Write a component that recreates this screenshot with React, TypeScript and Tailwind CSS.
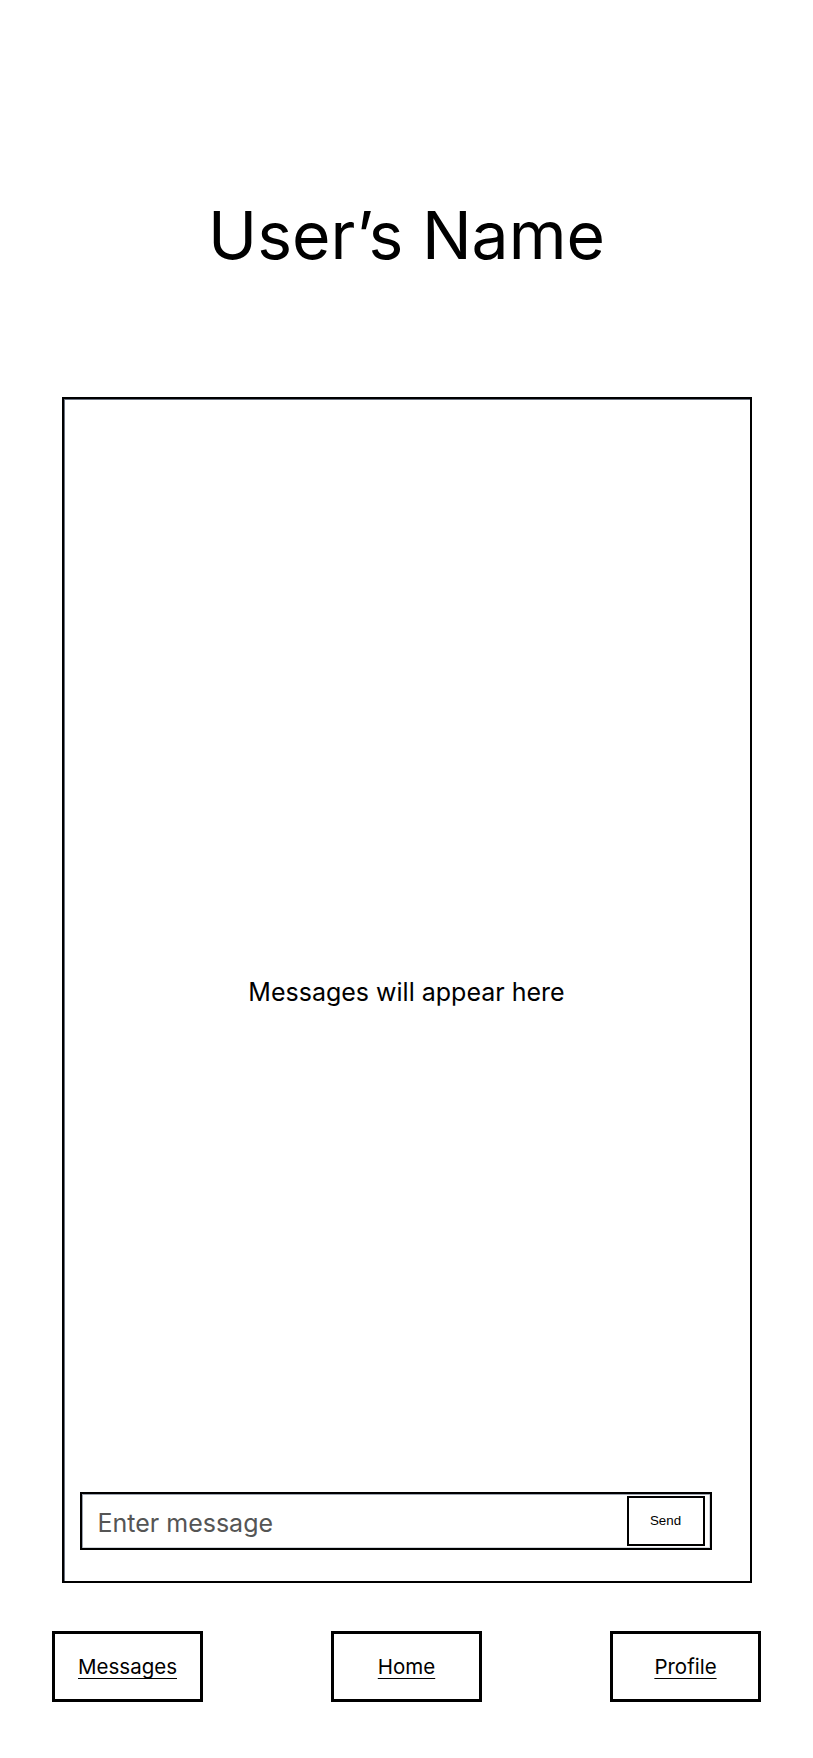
const navItems = ["Messages", "Home", "Profile"];

export default function App() {
  return (
    <div
      className="w-[813px] min-h-[1758px] bg-white text-black flex flex-col items-center"
      style={{ fontFamily: "Inter, 'Liberation Sans', sans-serif" }}
    >
      <h1 className="mt-[202px] text-[66px] leading-[66px] font-normal">
        User’s Name
      </h1>

      <div className="mt-[129px] w-[690px] h-[1186px] border-2 border-black shadow-[inset_1px_1px_0_#6b7280] flex flex-col">
        <div className="flex-1 flex items-center justify-center pt-[92px]">
          <p className="text-[25px] leading-[30px]">Messages will appear here</p>
        </div>
        <div className="pl-[16px] pb-[31px]">
          <div className="w-[632px] h-[58px] border-2 border-black shadow-[inset_1px_1px_0_#9ca3af,inset_-1px_-1px_0_#d1d5db] flex items-center justify-between pl-[16px] pr-[5px]">
            <input
              placeholder="Enter message"
              className="flex-1 min-w-0 pt-[6px] bg-transparent outline-none text-[25px] placeholder:text-[#555555]"
            />
            <button
              className="w-[78px] h-[50px] border-2 border-black bg-white text-[13.33px]"
              style={{ fontFamily: "'Liberation Sans', Arial, sans-serif" }}
            >
              Send
            </button>
          </div>
        </div>
      </div>

      <div className="mt-[48px] w-full px-[52px] flex justify-between">
        {navItems.map((item) => (
          <a
            key={item}
            href="#"
            className="w-[151px] h-[71px] border-[3px] border-black flex items-center justify-center pt-[2px] text-[20.5px] underline underline-offset-[4px] decoration-1"
          >
            {item}
          </a>
        ))}
      </div>
    </div>
  );
}
